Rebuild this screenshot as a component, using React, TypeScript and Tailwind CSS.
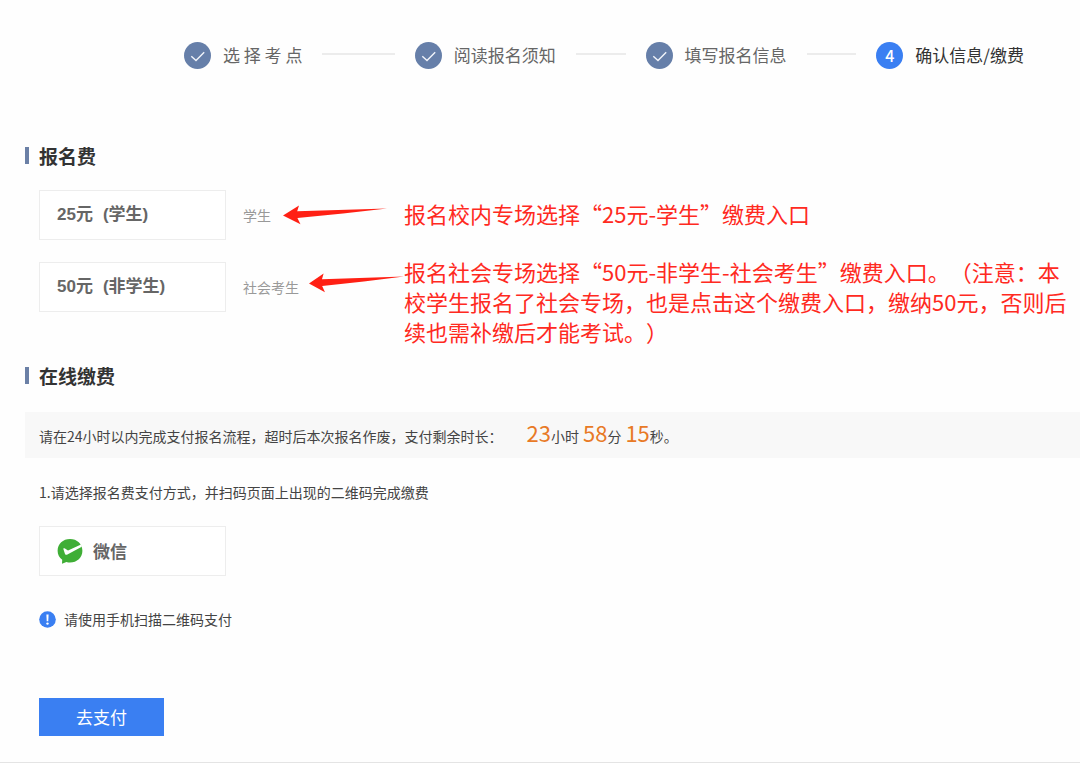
import { Fragment } from "react";
import { clsx } from "clsx";

const STEPS = ["选 择 考 点", "阅读报名须知", "填写报名信息", "确认信息/缴费"];
const CURRENT_STEP = 3;

const StepMarker = ({ index }: { index: number }) => {
  const done = index < CURRENT_STEP;
  return (
    <span
      className={clsx(
        "flex h-[27px] w-[27px] shrink-0 items-center justify-center rounded-full text-base font-medium text-white",
        done ? "bg-[#667fa9]" : "bg-[#3a7ff2]"
      )}
    >
      {done ? (
        <svg viewBox="0 0 27 27" className="h-full w-full" fill="none" stroke="#f1f4fa" strokeWidth="1.4" aria-hidden="true">
          <path d="M7.3 14.2 L12 18.6 L20.2 10.2" />
        </svg>
      ) : (
        index + 1
      )}
    </span>
  );
};

const Steps = () => (
  <ol className="flex pl-[184px] pr-14">
    {STEPS.map((label, i) => (
      <li
        key={label}
        aria-current={i === CURRENT_STEP ? "step" : undefined}
        className={clsx("flex items-center", i < STEPS.length - 1 && "flex-1")}
      >
        <StepMarker index={i} />
        <span
          className={clsx(
            "ml-3 whitespace-nowrap text-[17px] leading-7",
            i === CURRENT_STEP ? "text-[#333333]" : "text-[#666666]"
          )}
        >
          {label}
        </span>
        {i < STEPS.length - 1 && <span className="mx-5 mb-[2px] h-[2px] flex-1 bg-[#ececec]" />}
      </li>
    ))}
  </ol>
);

const SectionTitle = ({ children }: { children: string }) => (
  <h2 className="flex items-center gap-[10px] text-[19px] font-bold leading-7 text-[#333333]">
    <span className="mb-[2px] h-[17px] w-1 bg-[#6b80a6]" />
    {children}
  </h2>
);

// Hand-drawn style marker arrow, tip on the left
const Arrow = () => (
  <svg
    viewBox="0 0 104 20"
    preserveAspectRatio="none"
    className="h-5 min-w-0 max-w-[104px] flex-1"
    fill="#ff2014"
    aria-hidden="true"
  >
    <path d="M0 10.5 L16 0.4 L14.2 6.2 L104 3.4 L60 8.6 L14.4 13 L17.5 19.2 Z" />
  </svg>
);

const OPTION = "flex h-[50px] w-[187px] shrink-0 items-center border border-[#ededed] bg-white px-[17px] text-[17px] font-bold text-[#666666]";

interface FeeOptionProps {
  price: string;
  group: string;
  note: string;
  hint: string;
  multiline?: boolean;
}

const FeeOption = ({ price, group, note, hint, multiline = false }: FeeOptionProps) => (
  <div className="flex items-start">
    <div className={clsx("flex shrink-0 items-center", multiline && "pt-[6px]")}>
      <button type="button" className={clsx(OPTION, "gap-[10px] font-['Liberation_Sans','Noto_Sans_CJK_SC',sans-serif]")}>
        <span>{price}</span>
        <span>({group})</span>
      </button>
      <div className={clsx("ml-[17px] flex w-[161px]", multiline ? "items-start gap-[10px]" : "items-center gap-3")}>
        <span className="shrink-0 text-sm leading-7 text-[#999999]">{note}</span>
        <Arrow />
      </div>
    </div>
    <p className={clsx("text-[22px] text-[#ff2a1f] [text-spacing-trim:space-all]", multiline ? "leading-[30px]" : "leading-[46px]")}>
      {hint}
    </p>
  </div>
);

const COUNTDOWN = [
  { value: "23", unit: "小时" },
  { value: "58", unit: "分" },
  { value: "15", unit: "秒。" },
];

export default function App() {
  return (
    <main
      lang="zh-CN"
      className="border-b border-[#e4e4e4] bg-[#fefefe] pb-[26px] pt-[41px] font-['Noto_Sans_CJK_SC',sans-serif] text-sm text-[#444444]"
    >
      <Steps />

      <section className="mt-[73px] pl-[25px]">
        <SectionTitle>报名费</SectionTitle>
        <div className="mt-5 flex flex-col gap-4 pl-[14px]">
          <FeeOption price="25元" group="学生" note="学生" hint="报名校内专场选择“25元-学生”缴费入口" />
          <FeeOption
            price="50元"
            group="非学生"
            note="社会考生"
            hint="报名社会专场选择“50元-非学生-社会考生”缴费入口。（注意：本校学生报名了社会专场，也是点击这个缴费入口，缴纳50元，否则后续也需补缴后才能考试。）"
            multiline
          />
        </div>
      </section>

      <section className="mt-4 pl-[25px]">
        <SectionTitle>在线缴费</SectionTitle>
        <div className="mt-[22px] flex h-[46px] items-center bg-[#f8f8f8] pb-1 pl-[14px]">
          <p className="flex items-baseline">
            <span className="mr-6">请在24小时以内完成支付报名流程，超时后本次报名作废，支付剩余时长：</span>
            {COUNTDOWN.map(({ value, unit }) => (
              <Fragment key={unit}>
                <span className="text-[22px] leading-6 text-[#e87a26]">{value}</span>
                <span className="mr-1">{unit}</span>
              </Fragment>
            ))}
          </p>
        </div>

        <div className="pl-[14px]">
          <p className="mt-[22px] leading-6">1.请选择报名费支付方式，并扫码页面上出现的二维码完成缴费</p>
          <button type="button" className={clsx(OPTION, "mt-[22px] gap-[10px]")}>
            <svg viewBox="0 0 26 26" className="h-[26px] w-[26px]" aria-hidden="true">
              <path d="M13 1 C6 1 0.6 5.8 0.6 12.8 C0.6 16.8 2.4 19.8 5.2 21.8 L5 25.8 L9.4 24 C10.6 24.4 11.8 24.6 13 24.6 C20 24.6 25.4 19.4 25.4 12.8 C25.4 5.8 20 1 13 1 Z" fill="#3fae36" />
              <path d="M6.2 10.4 L7.6 10.2 L11 12.4 L24 6.6 L24.8 8.8 L10.4 16.6 C9.4 17.1 8.5 16.9 8 16 Z" fill="#ffffff" />
            </svg>
            微信
          </button>
          <p className="mt-[31px] flex items-center gap-2 leading-6">
            <svg viewBox="0 0 17 17" className="h-[17px] w-[17px]" aria-hidden="true">
              <circle cx="8.5" cy="8.5" r="8.3" fill="#3a7ff2" />
              <path d="M7.4 3.6 H9.6 L9.3 10.2 H7.7 Z" fill="#ffffff" />
              <circle cx="8.5" cy="12.6" r="1.2" fill="#ffffff" />
            </svg>
            请使用手机扫描二维码支付
          </p>
          <button type="button" className="mt-[67px] h-[38px] w-[125px] bg-[#3a7ff2] text-[17px] text-white">
            去支付
          </button>
        </div>
      </section>
    </main>
  );
}
